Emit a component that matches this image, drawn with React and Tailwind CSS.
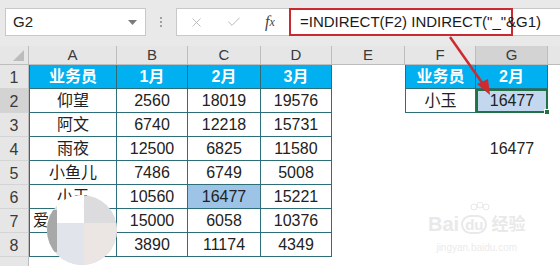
import { Fragment } from "react";
import { Check, X } from "lucide-react";

const colWidths = ["29px", "88px", "71px", "73px", "71px", "73px", "71px", "72px", "72px"];
const letters = ["A", "B", "C", "D", "E", "F", "G", "H"];

const rows = [
  ["业务员", "1月", "2月", "3月", "", "业务员", "2月", ""],
  ["仰望", "2560", "18019", "19576", "", "小玉", "16477", ""],
  ["阿文", "6740", "12218", "15731", "", "", "", ""],
  ["雨夜", "12500", "6825", "11580", "", "", "16477", ""],
  ["小鱼儿", "7486", "6749", "5008", "", "", "", ""],
  ["小玉", "10560", "16477", "15221", "", "", "", ""],
  ["爱在西元前", "15000", "6058", "10376", "", "", "", ""],
  ["生玉", "3890", "11174", "4349", "", "", "", ""],
  ["", "", "", "", "", "", "", ""],
];

const inTable = (r, c) => (r < 8 && c <= 3) || (r < 2 && (c === 5 || c === 6));

function Cell({ r, c, value }) {
  const selected = r === 1 && c === 6;
  let cls = "flex items-center justify-center h-[24px] text-[16px] text-[#222] whitespace-nowrap overflow-hidden";
  if (selected) {
    return (
      <div className="relative flex items-center justify-center h-[24px] text-[16px] text-[#222] border-2 border-[#217346] bg-[#c3d7ee]">
        {value}
        {/* fill handle */}
        <div className="absolute -right-[4px] -bottom-[4px] w-[6px] h-[6px] bg-[#217346] border border-white" />
      </div>
    );
  }
  if (inTable(r, c)) {
    cls += " border-r border-b border-[#2c6f78]";
    if (c === 0 || c === 5) cls += " border-l";
    if (r === 0) cls += " bg-[#00b0f0] text-white font-bold";
  }
  if (r === 5 && c === 2) cls += " bg-[#9dc3e6]";
  return <div className={cls}>{value}</div>;
}

function Toolbar() {
  return (
    <div className="h-[46px] bg-[#e9e9e9] flex items-start pt-[8px] pl-[5px]">
      <div className="w-[141px] h-[28px] bg-white border border-[#c8c8c8] flex items-center pl-[7px] pr-[8px] text-[15px] text-[#222]">
        <span className="flex-1">G2</span>
        <svg width="9" height="5" viewBox="0 0 9 5">
          <path d="M0 0 L9 0 L4.5 5 Z" fill="#7a7a7a" />
        </svg>
      </div>
      <div className="w-[30px] h-[28px] flex flex-col items-center justify-center gap-[2px]">
        <div className="w-[2px] h-[2px] bg-[#a0a0a0]" />
        <div className="w-[2px] h-[2px] bg-[#a0a0a0]" />
        <div className="w-[2px] h-[2px] bg-[#a0a0a0]" />
      </div>
      <div className="flex-1 h-[28px] bg-white border border-r-0 border-[#c8c8c8] flex items-center">
        <div className="w-[38px] flex justify-center">
          <X size={15} strokeWidth={1.4} color="#b3b3b3" />
        </div>
        <div className="w-[38px] flex justify-center">
          <Check size={16} strokeWidth={1.4} color="#b3b3b3" />
        </div>
        <div className="w-[34px] flex justify-center font-['Liberation_Serif',serif] italic text-[16px] text-[#444]">
          f<span className="text-[12px] mt-[3px]">x</span>
        </div>
        <div className="ml-[2px] w-[224px] h-[28px] border-[2.5px] border-[#c92a30] flex items-center pl-[9px] text-[15px] text-[#1a1a1a] whitespace-nowrap">
          =INDIRECT(F2) INDIRECT("_"&amp;G1)
        </div>
      </div>
    </div>
  );
}

export default function App() {
  return (
    <div className="relative w-[560px] h-[266px] overflow-hidden bg-white font-['Liberation_Sans','Noto_Sans_CJK_SC',sans-serif]">
      <Toolbar />
      <div className="grid w-max" style={{ gridTemplateColumns: colWidths.join(" ") }}>
        {/* column header row */}
        <div className="relative h-[19px] bg-[#e6e6e6] border-r border-b border-[#bdbdbd]">
          <svg className="absolute right-[4px] bottom-[3px]" width="11" height="11" viewBox="0 0 11 11">
            <path d="M11 0 L11 11 L0 11 Z" fill="#bcbcbc" />
          </svg>
        </div>
        {letters.map((l) => (
          <div
            key={l}
            className={`h-[19px] flex items-center justify-center text-[15px] text-[#3a3a3a] border-r border-b border-[#bdbdbd] ${
              l === "G" ? "bg-[#d3d3d3]" : "bg-[#e6e6e6]"
            }`}
          >
            {l === "H" ? "" : l}
          </div>
        ))}

        {rows.map((row, r) => (
          <Fragment key={r}>
            <div
              className={`h-[24px] flex items-center justify-center pt-[3px] text-[16px] text-[#3a3a3a] border-b border-[#d4d4d4] border-r border-r-[#bdbdbd] ${
                r === 1 ? "bg-[#d3d3d3]" : "bg-[#e6e6e6]"
              }`}
            >
              {r < 8 ? r + 1 : ""}
            </div>
            {row.map((v, c) => (
              <Cell key={c} r={r} c={c} value={v} />
            ))}
          </Fragment>
        ))}
      </div>

      {/* red arrow */}
      <svg className="absolute left-0 top-0 pointer-events-none" width="560" height="266">
        <line x1="450" y1="37" x2="483" y2="84" stroke="#cf2a2f" strokeWidth="2.5" />
        <path d="M490 95 L477 84 L488 79 Z" fill="#cf2a2f" />
      </svg>

      {/* loading placeholder overlay */}
      <svg className="absolute left-[47px] top-[195px] pointer-events-none" width="70" height="70" viewBox="0 0 70 70">
        <defs>
          <clipPath id="circ">
            <circle cx="35" cy="35" r="35" />
          </clipPath>
        </defs>
        <g clipPath="url(#circ)">
          <rect x="0" y="0" width="70" height="70" fill="#dcdcdf" />
          <rect x="0" y="15" width="11" height="42" fill="#a8a8a8" />
          <rect x="10" y="0" width="27" height="28" fill="#ffffff" />
          <rect x="10" y="28" width="27" height="42" fill="#e1e4ea" />
          <rect x="37" y="28" width="33" height="42" fill="#ebe5e3" />
        </g>
      </svg>

      {/* baidu watermark */}
      <div className="absolute left-[428px] top-[202px] flex flex-col items-center pointer-events-none">
        <svg width="22" height="12" viewBox="0 0 22 12" className="ml-[6px]">
          <circle cx="5" cy="5" r="3" fill="none" stroke="#e8e8e8" />
          <circle cx="11" cy="3" r="3" fill="none" stroke="#e8e8e8" />
          <circle cx="17" cy="5" r="3" fill="none" stroke="#e8e8e8" />
        </svg>
        <div className="flex items-center text-[20px] leading-none text-[#e9e9e9] font-bold">
          <span>Bai</span>
          <span className="ml-[2px] rounded-full border-2 border-[#e9e9e9] px-[2px] text-[15px]">du</span>
          <span className="ml-[4px] text-[17px]">经验</span>
        </div>
        <div className="mt-[6px] text-[10px] text-[#ebebeb]">jingyan.baidu.com</div>
      </div>
    </div>
  );
}
